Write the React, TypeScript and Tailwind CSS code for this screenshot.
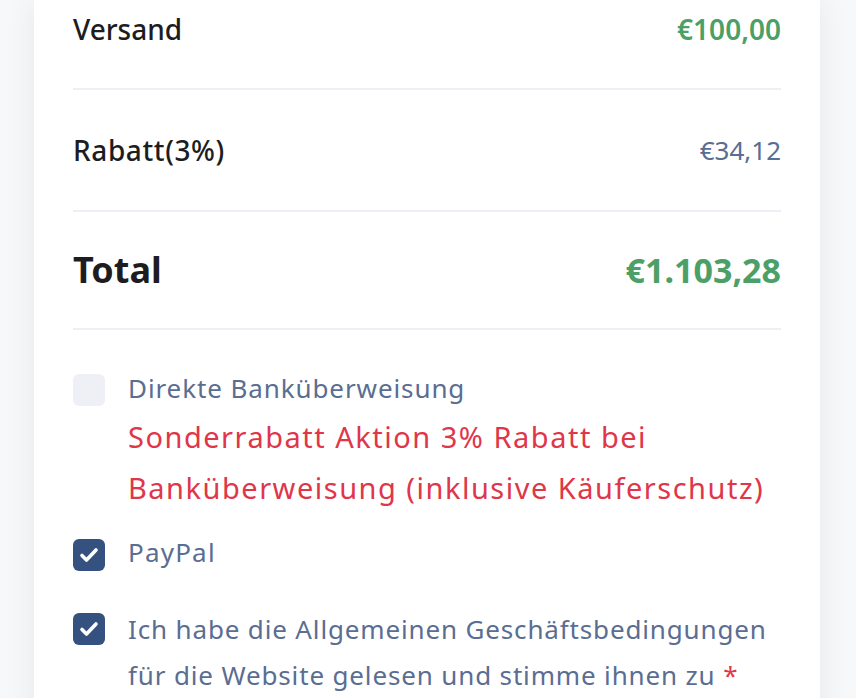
const CheckIcon = () => (
  <svg className="w-[24px] h-[24px]" viewBox="0 0 24 24" fill="none" stroke="white" strokeWidth={3.6} strokeLinecap="round" strokeLinejoin="round">
    <path d="M5 12.5l4.5 4.5L19 7" />
  </svg>
);

function Box({ checked }: { checked: boolean }) {
  return checked ? (
    <div className="w-[32px] h-[32px] shrink-0 rounded-[6px] bg-[#35517f] flex items-center justify-center">
      <CheckIcon />
    </div>
  ) : (
    <div className="w-[32px] h-[32px] shrink-0 rounded-[6px] bg-[#eff0f5]" />
  );
}

export default function App() {
  return (
    <div className="min-h-screen bg-[#f7f8fa] overflow-hidden" style={{ fontFamily: '"Noto Sans", sans-serif' }}>
      <div className="ml-[34px] w-[786px] bg-white shadow-[0_0_30px_rgba(0,0,0,0.07)] px-[39px] pb-[40px]">
        <div className="flex justify-between items-center pt-[13px] pb-[43px] border-b-2 border-[#eeeff4] text-[28px] leading-[32px]">
          <span className="text-[#1d1d1f] font-medium">Versand</span>
          <span className="text-[#4c9f67] font-semibold">€100,00</span>
        </div>
        <div className="flex justify-between items-center py-[44px] border-b-2 border-[#eeeff4] text-[28px] leading-[32px]">
          <span className="text-[#1d1d1f] font-medium tracking-[0.6px]">Rabatt(3%)</span>
          <span className="text-[#5a6d92] text-[26px]">€34,12</span>
        </div>
        <div className="flex justify-between items-center py-[38px] border-b-2 border-[#eeeff4] leading-[40px] font-bold">
          <span className="text-[#1d1d1f] text-[36px]">Total</span>
          <span className="text-[#4c9f67] text-[34px]">€1.103,28</span>
        </div>

        <div className="pt-[35px] flex flex-col">
          <div className="flex gap-[23px]">
            <div className="pt-[9px]"><Box checked={false} /></div>
            <div>
              <div className="text-[26px] leading-[46px] tracking-[0.9px] text-[#5a6d92]">Direkte Banküberweisung</div>
              <div className="text-[29px] leading-[51px] tracking-[1.5px] text-[#e0364a]">
                Sonderrabatt Aktion 3% Rabatt bei Banküberweisung (inklusive Käuferschutz)
              </div>
            </div>
          </div>
          <div className="flex gap-[23px] mt-[16px]">
            <div className="pt-[10px]"><Box checked /></div>
            <div className="text-[26px] leading-[46px] tracking-[1.2px] text-[#5a6d92]">PayPal</div>
          </div>
          <div className="flex gap-[23px] mt-[31px]">
            <div className="pt-[7px]"><Box checked /></div>
            <div className="text-[26px] leading-[46px] tracking-[0.85px] text-[#5a6d92]">
              Ich habe die Allgemeinen Geschäftsbedingungen für die Website gelesen und stimme ihnen zu{" "}
              <span className="text-[#e0364a]">*</span>
            </div>
          </div>
        </div>
      </div>
    </div>
  );
}
